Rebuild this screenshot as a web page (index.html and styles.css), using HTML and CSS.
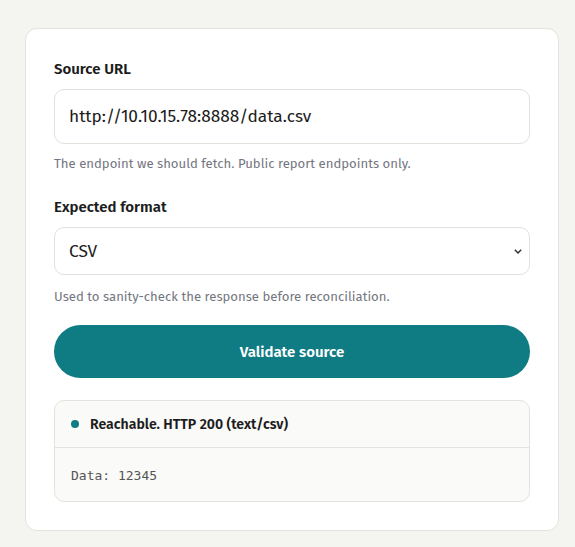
FILE: index.html
```html
<!DOCTYPE html>
<html lang="en">
<head>
    <meta charset="UTF-8">
    <meta name="viewport" content="width=device-width, initial-scale=1.0">
    <title>Validate source</title>
    <link rel="stylesheet" href="styles.css">
</head>
<body>
    <div class="card">
        <div class="field">
            <label class="field-label" for="sourceUrl">Source URL</label>
            <input class="text-input" id="sourceUrl" type="text" value="http://10.10.15.78:8888/data.csv">
            <p class="field-hint">The endpoint we should fetch. Public report endpoints only.</p>
        </div>

        <div class="field">
            <label class="field-label" for="format">Expected format</label>
            <div class="select-wrap">
                <select class="select-input" id="format">
                    <option selected>CSV</option>
                    <option>JSON</option>
                    <option>XML</option>
                </select>
                <svg class="select-arrow" width="8" height="5" viewBox="0 0 8 5" aria-hidden="true">
                    <path d="M0.8 0.8 L4 4 L7.2 0.8" fill="none" stroke="#2a2a2a" stroke-width="1.4"/>
                </svg>
            </div>
            <p class="field-hint">Used to sanity-check the response before reconciliation.</p>
        </div>

        <button class="validate-button" type="button">Validate source</button>

        <!-- Result of the last check -->
        <div class="result">
            <div class="result-head">
                <span class="status-dot"></span>
                <span class="status-text">Reachable. HTTP 200 (text/csv)</span>
            </div>
            <pre class="result-body">Data: 12345</pre>
        </div>
    </div>
</body>
</html>
```

FILE: styles.css
```css
/* Page */
* {
    margin: 0;
    padding: 0;
    box-sizing: border-box;
}

body {
    background-color: #f4f4f0;
    font-family: "Fira Sans", "Noto Sans", "Open Sans", sans-serif;
    color: #1c1c1c;
    padding: 28px 0 16px 25px;
}

.card {
    width: 534px;
    background-color: #fff;
    border: 1px solid #e4e3de;
    border-radius: 12px;
    padding: 29px 28px 28px;
    display: flex;
    flex-direction: column;
}

/* Form fields */
.field {
    display: flex;
    flex-direction: column;
    margin-bottom: 19px;
}

.field + .field {
    margin-top: 4px;
}

.field-label {
    font-size: 15px;
    font-weight: 600;
    line-height: 22px;
    margin-bottom: 9px;
}

.text-input,
.select-input {
    width: 100%;
    border: 1px solid #e2e1dc;
    border-radius: 10px;
    background-color: #fff;
    font-family: inherit;
    color: #1c1c1c;
    outline: none;
}

.text-input {
    height: 55px;
    padding: 0 14px;
    font-size: 17.3px;
}

.select-wrap {
    position: relative;
}

.select-input {
    height: 48px;
    padding: 0 30px 0 14px;
    font-size: 17.3px;
    appearance: none;
    -webkit-appearance: none;
}

/* chevron sits over the right end of the select */
.select-arrow {
    position: absolute;
    right: 8px;
    top: 22px;
    pointer-events: none;
}

.field-hint {
    font-size: 13.15px;
    line-height: 19px;
    color: #737680;
    margin-top: 10px;
}

.field + .field .field-hint {
    margin-top: 12px;
}

/* Button */
.validate-button {
    height: 53px;
    border: none;
    border-radius: 27px;
    background-color: #0f7b83;
    color: #fff;
    font-family: inherit;
    font-size: 15px;
    font-weight: 600;
    cursor: pointer;
}

.validate-button:hover {
    background-color: #0c6c73;
}

/* Result box */
.result {
    margin-top: 22px;
    background-color: #fafaf8;
    border: 1px solid #e4e3de;
    border-radius: 10px;
}

.result-head {
    display: flex;
    align-items: center;
    gap: 11px;
    height: 47px;
    padding: 0 16px;
    border-bottom: 1px solid #e4e3de;
}

.status-dot {
    width: 8px;
    height: 8px;
    border-radius: 50%;
    background-color: #0f7b83;
}

.status-text {
    font-size: 14.1px;
    font-weight: 600;
}

.result-body {
    padding: 19px 16px 16px;
    font-family: "DejaVu Sans Mono", "Liberation Mono", monospace;
    font-size: 13px;
    line-height: 18px;
    color: #555;
}
```
